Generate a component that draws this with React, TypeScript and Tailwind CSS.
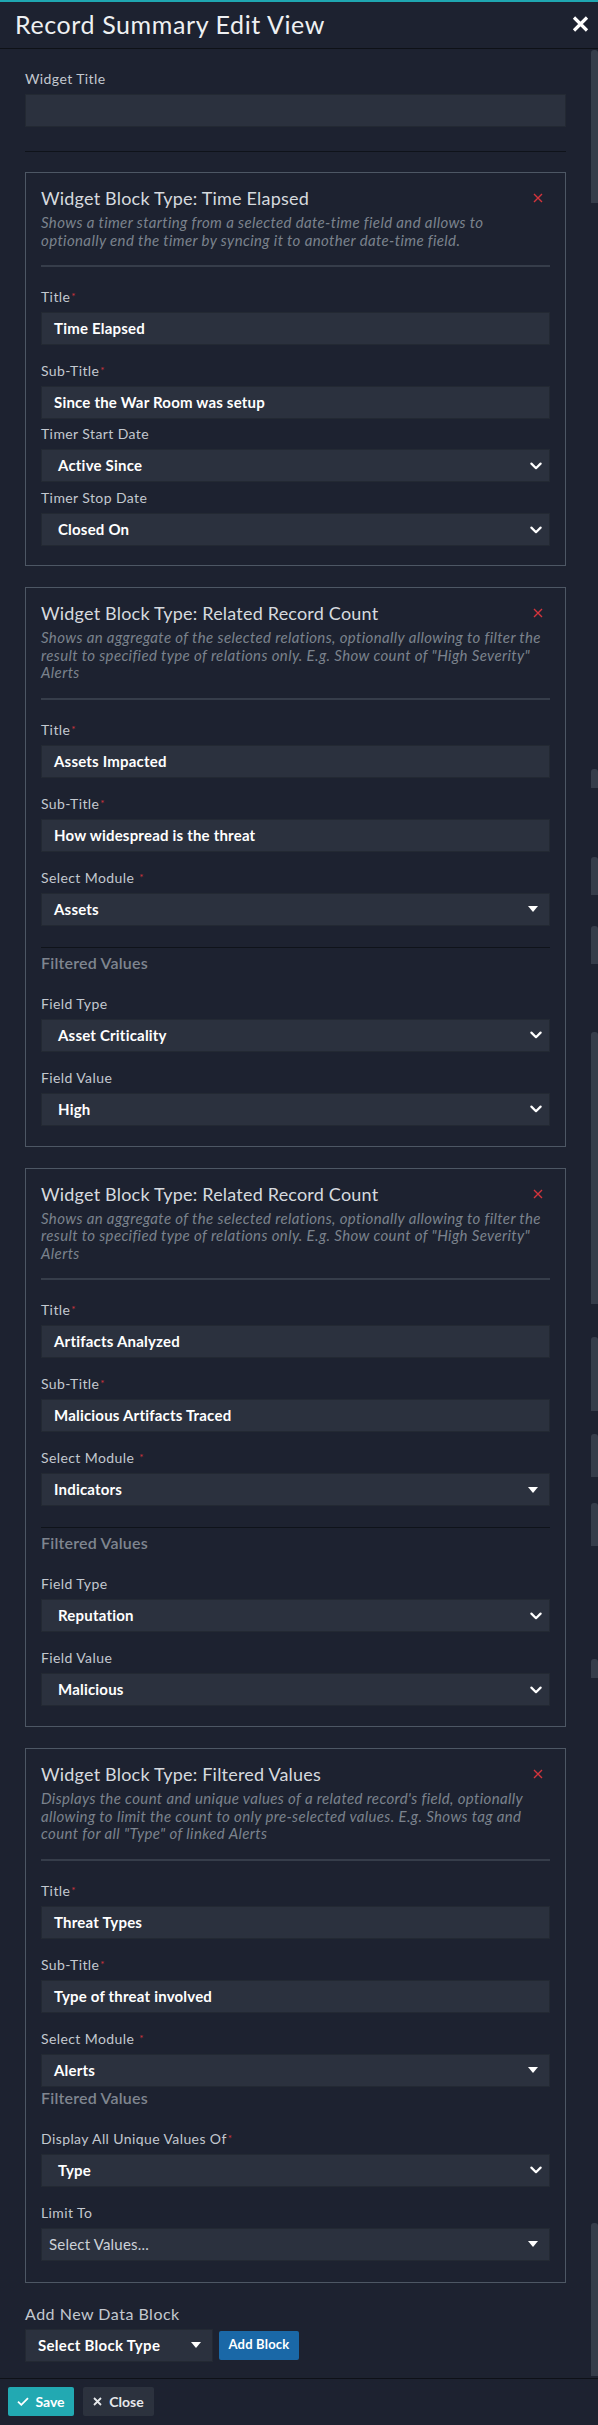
import React from "react";

function Req() {
  return <span className="text-[#d3343c] text-[10px] align-top relative top-[-1px] ml-[1px]">*</span>;
}

function Label({ text, req, space, className = "" }: { text: string; req?: boolean; space?: boolean; className?: string }) {
  return (
    <div className={`text-[14px] leading-[18px] tracking-[0.4px] text-[#c3c8cf] ${className}`}>
      {text}
      {space ? " " : ""}
      {req ? <Req /> : null}
    </div>
  );
}

function Input({ value }: { value: string }) {
  return (
    <div className="mt-[6px] h-[33px] bg-[#2b313e] border border-[#232933] flex items-center pl-[12px] text-[15px] tracking-[0.2px] font-bold text-white">
      {value}
    </div>
  );
}

function Chevron() {
  return (
    <svg width="12" height="8" viewBox="0 0 12 8" fill="none">
      <path d="M1.4 1.6 L6 6.2 L10.6 1.6" stroke="#ffffff" strokeWidth="2.2" strokeLinecap="round" strokeLinejoin="round" />
    </svg>
  );
}

function Caret() {
  return (
    <svg width="10" height="6" viewBox="0 0 10 6">
      <polygon points="0,0 10,0 5,6" fill="#ffffff" />
    </svg>
  );
}

function SelectChevron({ value }: { value: string }) {
  return (
    <div className="mt-[6px] h-[33px] bg-[#2b313e] border border-[#232933] flex items-center justify-between pl-[16px] pr-[7px] text-[15px] tracking-[0.2px] font-bold text-white">
      <span>{value}</span>
      <Chevron />
    </div>
  );
}

function SelectCaret({ value, muted }: { value: string; muted?: boolean }) {
  return (
    <div
      className={`mt-[6px] h-[33px] bg-[#2b313e] border border-[#232933] flex items-center justify-between pr-[11px] text-[15px] tracking-[0.2px] ${
        muted ? "pl-[7px] font-normal text-[#cdd2d9]" : "pl-[12px] font-bold text-white"
      }`}
    >
      <span>{value}</span>
      <Caret />
    </div>
  );
}

function RedX() {
  return (
    <svg width="10" height="10" viewBox="0 0 10 10" className="mt-[6px] mr-[7px] shrink-0">
      <path d="M1 1 L9 9 M9 1 L1 9" stroke="#d3343c" strokeWidth="1.4" />
    </svg>
  );
}

function CardHead({ title, desc }: { title: string; desc: string }) {
  return (
    <>
      <div className="flex justify-between items-start">
        <div className="text-[18px] leading-[22px] tracking-[0.2px] text-[#d6dadf]">{title}</div>
        <RedX />
      </div>
      <div className="mt-[5px] max-w-[504px] text-[15px] leading-[17.5px] tracking-[0.37px] italic text-[#7b828d]">{desc}</div>
      <div className="mt-[16px] h-[2px] bg-[#363d4a]" />
    </>
  );
}

function FilteredValues({ className = "" }: { className?: string }) {
  return (
    <div className={`text-[16px] leading-[20px] tracking-[0.2px] font-semibold text-[#7f858f] ${className}`}>Filtered Values</div>
  );
}

const RRC_DESC =
  'Shows an aggregate of the selected relations, optionally allowing to filter the result to specified type of relations only. E.g. Show count of "High Severity" Alerts';

function RelatedCard({ title, sub, module, ftype, fvalue }: { title: string; sub: string; module: string; ftype: string; fvalue: string }) {
  return (
    <div className="mt-[21px] border border-[#4d5764] px-[15px] pt-[14px] pb-[20px]">
      <CardHead title="Widget Block Type: Related Record Count" desc={RRC_DESC} />
      <Label text="Title" req className="mt-[21px]" />
      <Input value={title} />
      <Label text="Sub-Title" req className="mt-[17px]" />
      <Input value={sub} />
      <Label text="Select Module" req space className="mt-[17px]" />
      <SelectCaret value={module} />
      <div className="mt-[21px] h-[1px] bg-[#0f131a]" />
      <FilteredValues className="mt-[5px]" />
      <Label text="Field Type" className="mt-[22px]" />
      <SelectChevron value={ftype} />
      <Label text="Field Value" className="mt-[17px]" />
      <SelectChevron value={fvalue} />
    </div>
  );
}

const THUMBS: [number, number][] = [
  [50, 203],
  [769, 788],
  [857, 895],
  [926, 964],
  [1032, 1304],
  [1337, 1411],
  [1434, 1477],
  [1503, 1546],
  [1659, 1678],
  [2223, 2376],
];

export default function App() {
  return (
    <div className="w-[598px] h-[2425px] bg-[#1d2230] flex flex-col overflow-hidden font-[Lato,'Noto_Sans',sans-serif]">
      <div className="h-[2px] bg-[#1fa7b1] shrink-0" />
      <div className="h-[47px] shrink-0 border-b border-[#0e1117] flex items-center justify-between pl-[15px] pr-[9px]">
        <div className="text-[25px] leading-[30px] tracking-[0.6px] text-[#eef0f2] pb-[2px]">Record Summary Edit View</div>
        <svg width="17" height="16" viewBox="0 0 17 16" className="mb-[2px]">
          <path d="M2 1.5 L15 14.5 M15 1.5 L2 14.5" stroke="#ffffff" strokeWidth="3.2" />
        </svg>
      </div>

      <div className="flex-1 min-h-0 flex flex-row">
        <div className="flex-1 min-w-0 px-[25px] pt-[21px] overflow-hidden">
          <Label text="Widget Title" />
          <div className="mt-[6px] h-[33px] bg-[#2b313e] border border-[#232933]" />
          <div className="mt-[24px] h-[1px] bg-[#0f131a]" />

          {/* Card 1 */}
          <div className="mt-[20px] border border-[#4d5764] px-[15px] pt-[14px] pb-[19px]">
            <CardHead
              title="Widget Block Type: Time Elapsed"
              desc="Shows a timer starting from a selected date-time field and allows to optionally end the timer by syncing it to another date-time field."
            />
            <Label text="Title" req className="mt-[21px]" />
            <Input value="Time Elapsed" />
            <Label text="Sub-Title" req className="mt-[17px]" />
            <Input value="Since the War Room was setup" />
            <Label text="Timer Start Date" className="mt-[6px]" />
            <SelectChevron value="Active Since" />
            <Label text="Timer Stop Date" className="mt-[7px]" />
            <SelectChevron value="Closed On" />
          </div>

          <RelatedCard title="Assets Impacted" sub="How widespread is the threat" module="Assets" ftype="Asset Criticality" fvalue="High" />
          <RelatedCard title="Artifacts Analyzed" sub="Malicious Artifacts Traced" module="Indicators" ftype="Reputation" fvalue="Malicious" />

          {/* Card 4 */}
          <div className="mt-[21px] border border-[#4d5764] px-[15px] pt-[14px] pb-[21px]">
            <CardHead
              title="Widget Block Type: Filtered Values"
              desc={'Displays the count and unique values of a related record\'s field, optionally allowing to limit the count to only pre-selected values. E.g. Shows tag and count for all "Type" of linked Alerts'}
            />
            <Label text="Title" req className="mt-[21px]" />
            <Input value="Threat Types" />
            <Label text="Sub-Title" req className="mt-[17px]" />
            <Input value="Type of threat involved" />
            <Label text="Select Module" req space className="mt-[17px]" />
            <SelectCaret value="Alerts" />
            <FilteredValues className="mt-[1px]" />
            <Label text="Display All Unique Values Of" req className="mt-[22px]" />
            <SelectChevron value="Type" />
            <Label text="Limit To" className="mt-[17px]" />
            <SelectCaret value="Select Values..." muted />
          </div>

          <div className="mt-[21px] text-[16px] leading-[20px] tracking-[0.5px] text-[#c3c8cf]">Add New Data Block</div>
          <div className="mt-[5px] flex items-center">
            <div className="w-[188px] h-[33px] bg-[#2b313e] border border-[#232933] flex items-center justify-between pl-[12px] pr-[11px] text-[15px] tracking-[0.3px] font-bold text-white">
              <span>Select Block Type</span>
              <Caret />
            </div>
            <div className="ml-[6px] w-[80px] h-[29px] rounded-[2px] bg-[#1a68a7] flex items-center justify-center text-[13px] tracking-[0.2px] font-bold text-white">
              Add Block
            </div>
          </div>
        </div>

        <div className="w-[7px] shrink-0 relative">
          {THUMBS.map(([a, b], i) => (
            <div
              key={i}
              className="absolute left-0 right-0 bg-[#363d4a] rounded-t-[3px]"
              style={{ top: a - 49, height: b - a }}
            />
          ))}
        </div>
      </div>

      <div className="h-[47px] shrink-0 border-t border-[#0e1117] flex items-start pt-[8px] pl-[8px] gap-[9px]">
        <div className="w-[66px] h-[29px] rounded-[2px] bg-[#22a9b2] flex items-center justify-center gap-[6px] text-[14px] font-bold text-white">
          <svg width="12" height="9" viewBox="0 0 12 9" fill="none">
            <path d="M1 4.6 L4.3 7.8 L11 1.2" stroke="#ffffff" strokeWidth="1.8" />
          </svg>
          <span>Save</span>
        </div>
        <div className="w-[71px] h-[29px] rounded-[2px] bg-[#2c323e] flex items-center justify-center gap-[7px] text-[14px] font-bold text-[#e6e8eb]">
          <svg width="9" height="9" viewBox="0 0 9 9" fill="none">
            <path d="M1 1 L8 8 M8 1 L1 8" stroke="#e6e8eb" strokeWidth="1.8" />
          </svg>
          <span>Close</span>
        </div>
      </div>
    </div>
  );
}
